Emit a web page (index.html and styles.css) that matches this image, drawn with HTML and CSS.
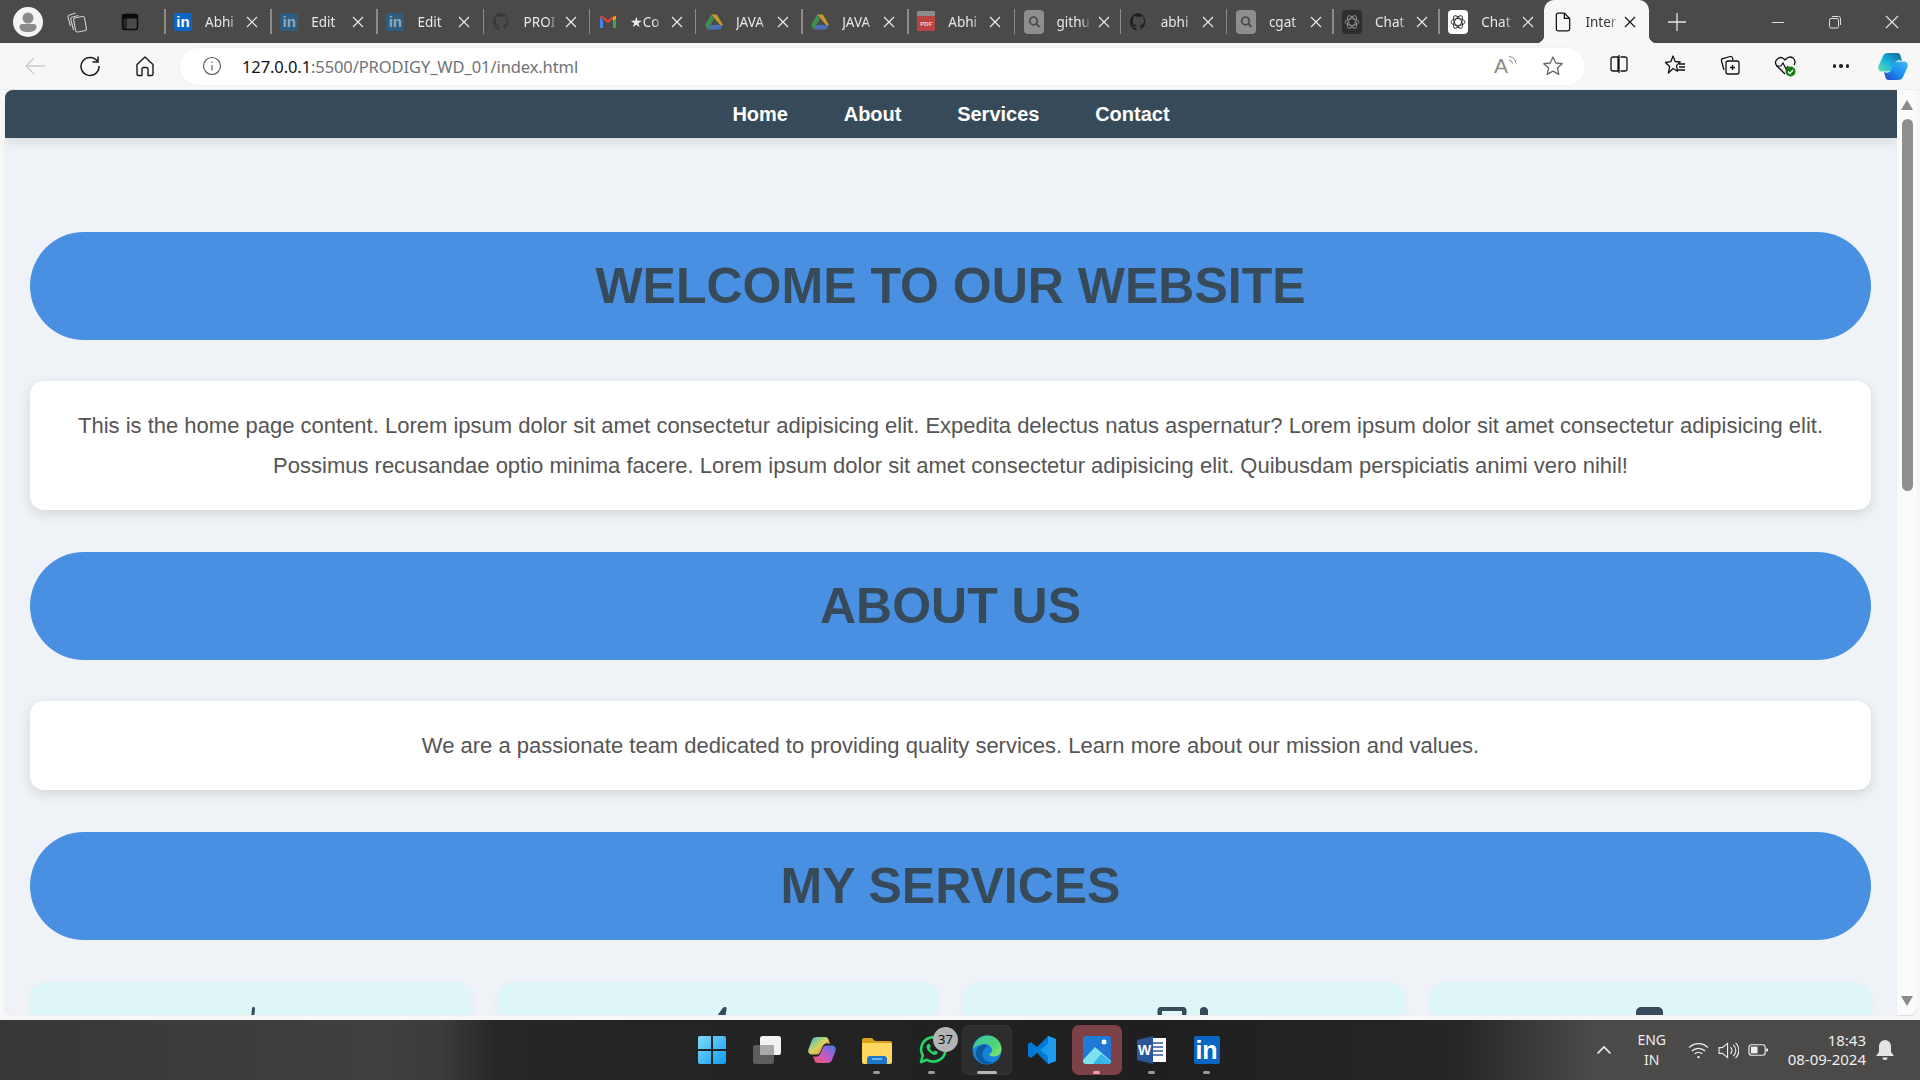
FILE: index.html
```html
<!DOCTYPE html>
<html lang="en">
<head>
<meta charset="utf-8">
<title>Browser window</title>
<link rel="stylesheet" href="styles.css">
</head>
<body>
<div class="desktop">
  <header class="tabbar">
    <div class="tb-left">
      <div class="tb-profile"><span class="avatar"><svg viewBox="0 0 30 30" width="30" height="30"><circle cx="15" cy="11" r="5.5" fill="#8b8b8b"/><path d="M6.5 20a3 3 0 0 1 3-3h11a3 3 0 0 1 3 3c0 3-3 5-8.500 5s-8.500-2-8.500-5z" fill="#8b8b8b"/></svg></span></div>
      <div class="tb-work"><svg viewBox="0 0 24 24" width="24" height="24" fill="none" stroke="#cfcfcf" stroke-width="1.100" stroke-linejoin="round"><rect x="9.500" y="7" width="11" height="14.500" rx="2" transform="rotate(-10 15 14)"/><path d="M8.500 20 5.800 9.500a2 2 0 0 1 1.500-2.500l6-1.500"/><path d="M5.500 16 3 7.500A2 2 0 0 1 4.500 5l6-2"/></svg></div>
      <div class="tb-vert"><svg viewBox="0 0 20 20" width="20" height="20"><rect x="2.500" y="2.500" width="15" height="15" rx="2.500" fill="none" stroke="#0b0b0b" stroke-width="1.500"/><rect x="2.500" y="2.500" width="15" height="4" fill="#0b0b0b"/><rect x="2.500" y="2.500" width="4.500" height="15" fill="#0b0b0b" opacity=".55"/></svg></div>
    </div>

    <div class="tab"><span class="fav in-logo">in</span><span class="tab-t">Abhi</span><svg class="x" viewBox="0 0 12 12"><path d="M1 1l10 10M11 1 1 11"/></svg></div>
    <div class="tab"><span class="fav in-logo dim">in</span><span class="tab-t">Edit</span><svg class="x" viewBox="0 0 12 12"><path d="M1 1l10 10M11 1 1 11"/></svg></div>
    <div class="tab"><span class="fav in-logo dim">in</span><span class="tab-t">Edit</span><svg class="x" viewBox="0 0 12 12"><path d="M1 1l10 10M11 1 1 11"/></svg></div>
    <div class="tab"><svg class="fav" viewBox="0 0 18 18"><path d="M9 0a9 9 0 0 0-2.800 17.600v-3c-2.500.5-3-1.100-3-1.100-.4-1-1-1.300-1-1.300-.8-.6 0-.6 0-.6.900.1 1.400 1 1.400 1 .8 1.400 2.100 1 2.600.8.100-.6.300-1 .6-1.200-2-.2-4.100-1-4.100-4.400 0-1 .3-1.800.9-2.400-.1-.2-.4-1.100.1-2.400 0 0 .8-.2 2.500.9a8.500 8.500 0 0 1 4.500 0c1.700-1.100 2.500-.9 2.500-.9.500 1.300.2 2.200.1 2.400.6.600.9 1.400.9 2.400 0 3.400-2.100 4.200-4.100 4.400.3.300.6.800.6 1.700v2.500A9 9 0 0 0 9 0z" fill="#3a3a3a"/></svg><span class="tab-t">PROI</span><svg class="x" viewBox="0 0 12 12"><path d="M1 1l10 10M11 1 1 11"/></svg></div>
    <div class="tab"><svg class="fav" viewBox="0 0 18 18"><path d="M1 4v11h3V8z" fill="#4285f4"/><path d="M14 8v7h3V4z" fill="#34a853"/><path d="M1 4l8 6 8-6-1.500-1.500L9 7 2.500 2.500z" fill="#ea4335"/><path d="M14 4.500 17 3v2l-3 3z" fill="#fbbc04"/></svg><span class="tab-t">★Co</span><svg class="x" viewBox="0 0 12 12"><path d="M1 1l10 10M11 1 1 11"/></svg></div>
    <div class="tab"><svg class="fav" viewBox="0 0 18 18"><path d="M6.200 1.500h5.600L18 12l-3 0z" fill="#c49a2c"/><path d="M6.200 1.500 0 12l2.800 4.800L9 6z" fill="#3f8d53"/><path d="M2.800 16.500h12.400L18 12H5.500z" fill="#4a6fb5"/></svg><span class="tab-t">JAVA</span><svg class="x" viewBox="0 0 12 12"><path d="M1 1l10 10M11 1 1 11"/></svg></div>
    <div class="tab"><svg class="fav" viewBox="0 0 18 18"><path d="M6.200 1.500h5.600L18 12l-3 0z" fill="#c49a2c"/><path d="M6.200 1.500 0 12l2.800 4.800L9 6z" fill="#3f8d53"/><path d="M2.800 16.500h12.400L18 12H5.500z" fill="#4a6fb5"/></svg><span class="tab-t">JAVA</span><svg class="x" viewBox="0 0 12 12"><path d="M1 1l10 10M11 1 1 11"/></svg></div>
    <div class="tab"><span class="fav pdf">PDF</span><span class="tab-t">Abhi</span><svg class="x" viewBox="0 0 12 12"><path d="M1 1l10 10M11 1 1 11"/></svg></div>
    <div class="tab"><span class="fav search"><svg viewBox="0 0 18 18" width="18" height="18" fill="none" stroke="#4b4a48" stroke-width="1.800"><circle cx="8.500" cy="8" r="3.800"/><path d="M11.500 11l3 3"/></svg></span><span class="tab-t">githu</span><svg class="x" viewBox="0 0 12 12"><path d="M1 1l10 10M11 1 1 11"/></svg></div>
    <div class="tab"><svg class="fav" viewBox="0 0 18 18"><path d="M9 0a9 9 0 0 0-2.800 17.600v-3c-2.500.5-3-1.100-3-1.100-.4-1-1-1.300-1-1.300-.8-.6 0-.6 0-.6.900.1 1.400 1 1.400 1 .8 1.400 2.100 1 2.600.8.100-.6.300-1 .6-1.200-2-.2-4.100-1-4.100-4.400 0-1 .3-1.800.9-2.400-.1-.2-.4-1.100.1-2.400 0 0 .8-.2 2.500.9a8.500 8.500 0 0 1 4.500 0c1.700-1.100 2.500-.9 2.500-.9.500 1.300.2 2.200.1 2.400.6.600.9 1.400.9 2.400 0 3.400-2.100 4.200-4.100 4.400.3.300.6.800.6 1.700v2.500A9 9 0 0 0 9 0z" fill="#1c2127"/></svg><span class="tab-t">abhi</span><svg class="x" viewBox="0 0 12 12"><path d="M1 1l10 10M11 1 1 11"/></svg></div>
    <div class="tab"><span class="fav search"><svg viewBox="0 0 18 18" width="18" height="18" fill="none" stroke="#4b4a48" stroke-width="1.800"><circle cx="8.500" cy="8" r="3.800"/><path d="M11.500 11l3 3"/></svg></span><span class="tab-t">cgat</span><svg class="x" viewBox="0 0 12 12"><path d="M1 1l10 10M11 1 1 11"/></svg></div>
    <div class="tab"><span class="fav gpt dark"><svg viewBox="0 0 18 18" width="18" height="18" fill="none" stroke="#8c8c8c" stroke-width=".9"><ellipse cx="9" cy="9" rx="7" ry="3.400"/><ellipse cx="9" cy="9" rx="7" ry="3.400" transform="rotate(60 9 9)"/><ellipse cx="9" cy="9" rx="7" ry="3.400" transform="rotate(120 9 9)"/></svg></span><span class="tab-t">Chat</span><svg class="x" viewBox="0 0 12 12"><path d="M1 1l10 10M11 1 1 11"/></svg></div>
    <div class="tab"><span class="fav gpt"><svg viewBox="0 0 18 18" width="18" height="18" fill="none" stroke="#2a2a2a" stroke-width=".9"><ellipse cx="9" cy="9" rx="7" ry="3.400"/><ellipse cx="9" cy="9" rx="7" ry="3.400" transform="rotate(60 9 9)"/><ellipse cx="9" cy="9" rx="7" ry="3.400" transform="rotate(120 9 9)"/></svg></span><span class="tab-t">Chat</span><svg class="x" viewBox="0 0 12 12"><path d="M1 1l10 10M11 1 1 11"/></svg></div>
    <div class="tab-active"><svg class="doc" viewBox="0 0 18 22" width="16" height="20" fill="none" stroke="#111" stroke-width="1.400"><path d="M3.500 1h7L16.500 7v12a2 2 0 0 1-2 2h-11a2 2 0 0 1-2-2V3a2 2 0 0 1 2-2z"/><path d="M10.500 1v6h6"/></svg><span class="tab-t active-t">Inter</span><svg class="x dark-x" viewBox="0 0 12 12"><path d="M1 1l10 10M11 1 1 11"/></svg></div>

    <div class="tb-plus"><svg viewBox="0 0 18 18" width="18" height="18" stroke="#e6e6e6" stroke-width="1.300"><path d="M9 0v18M0 9h18"/></svg></div>
    <div class="win">
      <span class="win-btn"><svg viewBox="0 0 14 14" width="14" height="14" stroke="#dcdcdc"><path d="M1 7.500h12"/></svg></span>
      <span class="win-btn"><svg viewBox="0 0 14 14" width="14" height="14" fill="none" stroke="#dcdcdc"><rect x="1.500" y="3.500" width="9" height="9.500" rx="1.500"/><path d="M4 1.500h6.500a2 2 0 0 1 2 2V10"/></svg></span>
      <span class="win-btn"><svg viewBox="0 0 14 14" width="14" height="14" stroke="#e6e6e6" stroke-width="1.100"><path d="M1 1l12 12M13 1 1 13"/></svg></span>
    </div>
  </header>

  <nav class="toolbar">
    <span class="tool"><svg viewBox="0 0 22 22" width="22" height="22" fill="none" stroke="#c9c9c9" stroke-width="1.400"><path d="M21 11H2M10 3l-8 8 8 8"/></svg></span>
    <span class="tool"><svg viewBox="0 0 22 22" width="22" height="22" fill="none" stroke="#1a1a1a" stroke-width="1.500"><path d="M18.500 6.500A9 9 0 1 0 20 11"/><path d="M19 1.500v5.500h-5.500"/></svg></span>
    <span class="tool"><svg viewBox="0 0 22 22" width="22" height="22" fill="none" stroke="#1a1a1a" stroke-width="1.400" stroke-linejoin="round"><path d="M3 9.500 11 2l8 7.500V19a1.500 1.500 0 0 1-1.500 1.500H14V14a1.500 1.500 0 0 0-1.500-1.500h-3A1.500 1.500 0 0 0 8 14v6.500H4.500A1.500 1.500 0 0 1 3 19z"/></svg></span>
    <div class="address">
      <svg class="info" viewBox="0 0 20 20" width="20" height="20" fill="none" stroke="#555" stroke-width="1.100"><circle cx="10" cy="10" r="8.500"/><path d="M10 9v5.500M10 5.500v1.500"/></svg>
      <span class="url"><span class="url-h">127.0.0.1</span>:5500/PRODIGY_WD_01/index.html</span>
      <span class="addr-a">
        <span class="ra">A<svg viewBox="0 0 10 12" width="10" height="12" fill="none" stroke="#8a8a8a"><path d="M1 1.500a8 8 0 0 1 7 7M1 5a4 4 0 0 1 3.500 3.500"/></svg></span>
        <svg viewBox="0 0 22 22" width="22" height="22" fill="none" stroke="#666" stroke-width="1.300" stroke-linejoin="round"><path d="M11 2l2.800 6 6.400.7-4.800 4.300 1.400 6.400L11 16.100l-5.800 3.300 1.400-6.400-4.800-4.300L8.200 8z"/></svg>
      </span>
    </div>
    <div class="tools-r">
      <span class="tool-r"><svg viewBox="0 0 20 20" width="20" height="20" fill="none" stroke="#111" stroke-width="1.300"><path d="M9 3H4a2 2 0 0 0-2 2v10a2 2 0 0 0 2 2h5zM11.500 3H16a2 2 0 0 1 2 2v10a2 2 0 0 1-2 2h-4.500M10 1v18"/></svg></span>
      <span class="tool-r"><svg viewBox="0 0 22 22" width="22" height="22" fill="none" stroke="#111" stroke-width="1.300" stroke-linejoin="round"><path d="M9 2l2.200 5.500 5 .5-3.800 3.600 1.200 5.600L9 14.500 4.400 19l1.200-6.500L1.500 8.500l5.300-.8z"/><path d="M15 10h6M15 13h6M14 16h7"/></svg></span>
      <span class="tool-r"><svg viewBox="0 0 22 22" width="22" height="22" fill="none" stroke="#111" stroke-width="1.300"><rect x="7" y="7" width="13" height="13" rx="2"/><path d="M11 13.500h5M13.500 11v5M5 16 2.500 7a2 2 0 0 1 1.500-2.500l7-2a2 2 0 0 1 2.500 1.500l.5 2"/></svg></span>
      <span class="tool-r"><svg viewBox="0 0 24 24" width="24" height="24" fill="none"><path d="M12 20 3.500 11.500A5 5 0 0 1 11 5l1 1 1-1a5 5 0 0 1 8 6" stroke="#111" stroke-width="1.300"/><path d="M3 12h5l2-3 3 6 2-3" stroke="#111" stroke-width="1.200"/><circle cx="17.500" cy="17.500" r="5" fill="#107c10"/><path d="M15 17.500l2 2 3-3.500" stroke="#fff" stroke-width="1.300"/></svg></span>
      <span class="tool-r dots"><i></i><i></i><i></i></span>
    </div>
    <span class="copilot"><svg viewBox="0 0 30 27" width="30" height="27"><defs><linearGradient id="cpa" x1="0" y1="1" x2="1" y2="0"><stop offset="0" stop-color="#66e3a8"/><stop offset=".45" stop-color="#19b4e0"/><stop offset="1" stop-color="#12648e"/></linearGradient><linearGradient id="cpb" x1="1" y1="0" x2="0" y2="1"><stop offset="0" stop-color="#3bc0f5"/><stop offset=".55" stop-color="#1b8cf0"/><stop offset="1" stop-color="#2244c8"/></linearGradient></defs><path d="M10 0h9c2 0 3 .8 3.500 2.500L24 8c-2-1-5-1-6.500 1-1.500 2-2 4-3 6.500-.6 1.800-2 3-4 3H4c-3 0-4.500-2.500-3.500-5.500L5 3c.7-2 2.500-3 5-3z" fill="url(#cpa)"/><path d="M20 27h-9c-2 0-3-.8-3.500-2.500L6 19c2 1 5 1 6.500-1 1.500-2 2-4 3-6.500.6-1.800 2-3 4-3H26c3 0 4.500 2.500 3.500 5.500L25 24c-.7 2-2.500 3-5 3z" fill="url(#cpb)"/></svg></span>
  </nav>

  <div class="viewport">
    <main class="page">
      <div class="site-nav">
        <a class="site-link">Home</a><a class="site-link">About</a><a class="site-link">Services</a><a class="site-link">Contact</a>
      </div>
      <div class="content">
        <h1 class="banner">WELCOME TO OUR WEBSITE</h1>
        <p class="card">This is the home page content. Lorem ipsum dolor sit amet consectetur adipisicing elit. Expedita delectus natus aspernatur? Lorem ipsum dolor sit amet consectetur adipisicing elit. Possimus recusandae optio minima facere. Lorem ipsum dolor sit amet consectetur adipisicing elit. Quibusdam perspiciatis animi vero nihil!</p>
        <h2 class="banner">ABOUT US</h2>
        <p class="card">We are a passionate team dedicated to providing quality services. Learn more about our mission and values.</p>
        <h2 class="banner">MY SERVICES</h2>
        <div class="services">
          <div class="svc"><svg viewBox="0 0 60 60" width="60" height="60"><path d="M32.500 0c1 0 1.500.5 1.500 1.500L33 12h-3l1-10.500c.1-1 .6-1.500 1.500-1.500z"/></svg></div>
          <div class="svc"><svg viewBox="0 0 60 60" width="60" height="60"><path d="M38 0c1.500 0 1.800 1 1.500 2.500L38 12H28L35 2c1-1.500 2-2 3-2z"/></svg></div>
          <div class="svc"><svg viewBox="0 0 60 60" width="60" height="60"><path d="M7 0h22a3.500 3.500 0 0 1 3.500 3.500V12H3.500V3.500A3.500 3.500 0 0 1 7 0zM8 4v8h20V4z"/><path d="M37 0c2 0 3 1 4 3v9h-8V3c0-2 2-3 4-3z" transform="translate(13 0)"/></svg></div>
          <div class="svc"><svg viewBox="0 0 60 60" width="60" height="60"><path d="M21 0h17a5 5 0 0 1 5 5v7H16V5a5 5 0 0 1 5-5z"/></svg></div>
        </div>
      </div>
    </main>
    <aside class="scrollbar">
      <span class="sb-up"></span>
      <span class="sb-thumb"></span>
      <span class="sb-down"></span>
    </aside>
  </div>

  <footer class="taskbar">
    <div class="tk-side"></div>
    <div class="tk-center">
      <span class="tk"><svg viewBox="0 0 30 30" width="30" height="30"><defs><linearGradient id="wn" x1="0" y1="0" x2="1" y2="1"><stop offset="0" stop-color="#7fdcfb"/><stop offset="1" stop-color="#0f9bf0"/></linearGradient></defs><path d="M1 3a2 2 0 0 1 2-2h11v13H1zM16 1h11a2 2 0 0 1 2 2v11H16zM1 16h13v13H3a2 2 0 0 1-2-2zM16 16h13v11a2 2 0 0 1-2 2H16z" fill="url(#wn)"/></svg></span>
      <span class="tk"><svg viewBox="0 0 30 30" width="30" height="30"><rect x="1" y="10" width="21" height="19" rx="2.500" fill="#5d5d5d"/><rect x="8" y="1" width="21" height="19" rx="2.500" fill="#f2f2f2"/><rect x="8" y="10" width="14" height="10" fill="#a9a9a9"/></svg></span>
      <span class="tk"><svg viewBox="0 0 30 30" width="30" height="30"><defs><linearGradient id="cl" x1="0" y1="0" x2="1" y2="1"><stop offset="0" stop-color="#2fb6e8"/><stop offset=".5" stop-color="#d7d55a"/><stop offset="1" stop-color="#f3704a"/></linearGradient><linearGradient id="cr" x1="1" y1="0" x2="0" y2="1"><stop offset="0" stop-color="#3f7bea"/><stop offset=".5" stop-color="#c05ac8"/><stop offset="1" stop-color="#f2576a"/></linearGradient></defs><path d="M10 2h8c2 0 3 .8 3.500 2.500L23 9c-2-1-5-1-6.500 1-1.500 2-2 4-3 6.500-.6 1.800-2 3-4 3H5c-3 0-4.500-2.500-3.500-5.500L5 5c.7-2 2.500-3 5-3z" fill="url(#cl)"/><path d="M20 28h-9c-2 0-3-.8-3.500-2.500L6 21c2 1 5 1 6.500-1 1.500-2 2-4 3-6.500.6-1.800 2-3 4-3H25c3 0 4.500 2.500 3.500 5.500L25 25c-.7 2-2.500 3-5 3z" fill="url(#cr)"/></svg></span>
      <span class="tk"><svg viewBox="0 0 30 30" width="30" height="30"><path d="M0 5a2 2 0 0 1 2-2h8l3 3h15a2 2 0 0 1 2 2v2H0z" fill="#dda21b"/><path d="M0 8h30v19a2 2 0 0 1-2 2H2a2 2 0 0 1-2-2z" fill="#ffd75e"/><path d="M5 29v-5a3 3 0 0 1 3-3h14a3 3 0 0 1 3 3v5z" fill="#1d77c9"/><path d="M10 24h10" stroke="#8cc9f5" stroke-width="1.500"/></svg><i class="pill"></i></span>
      <span class="tk"><svg viewBox="0 0 30 30" width="30" height="30" fill="none"><path d="M4 27l1.800-6.500A12.200 12.200 0 1 1 10 24.800z" stroke="#25d366" stroke-width="2.600" stroke-linejoin="round"/><path d="M10.500 9.500c1-1 2-.8 2.500.3l.7 1.500c.2.600-.8 1.400-1 2 .7 1.600 2 2.800 3.500 3.500.6-.3 1.300-1.300 2-1l1.700.8c1 .6 1 1.500.2 2.400-2 2-5 .8-8-2.200-2.800-2.800-3.500-5.300-1.600-7.300z" fill="#25d366"/></svg><span class="badge">37</span><i class="pill"></i></span>
      <span class="tk tk-edge"><svg viewBox="0 0 30 30" width="30" height="30"><defs><linearGradient id="eg" x1="0" y1="0" x2="1" y2="1"><stop offset="0" stop-color="#36c5a3"/><stop offset=".6" stop-color="#4fd37a"/><stop offset="1" stop-color="#8ee36f"/></linearGradient></defs><circle cx="15" cy="15" r="14.500" fill="#1683d8"/><path d="M1 14C2 6 8 .5 15.500.5 23.500.5 29.500 6.500 29.500 14c0 5-4 7.500-8 7.500-2.500 0-4.500-1-4.500-2.500 2-.5 3-2 3-3.500 0-4-3.500-6.500-7-6.500-5 0-10 2.500-12 5z" fill="url(#eg)"/><path d="M13 9.500c-5 0-9 4-9 8.500 0 6 5 11 11 11 3 0 5-.8 7-2-3 .8-9 .5-11-4.500-1.500-4 0-9 5-11z" fill="#0c59a4"/></svg><i class="pill wide"></i></span>
      <span class="tk"><svg viewBox="0 0 30 30" width="30" height="30"><path d="M21 1 10 12 4 7 1 9v12l3 2 6-5 11 11 8-3V4z" fill="#0078d4"/><path d="M21 1 29 4v22l-8 3zM21 9v12l-8-6z" fill="#1f9cf0"/></svg></span>
      <span class="tk tk-photos"><svg viewBox="0 0 30 30" width="30" height="30"><defs><linearGradient id="ph" x1="0" y1="0" x2="1" y2="1"><stop offset="0" stop-color="#1a7fd8"/><stop offset="1" stop-color="#2a6fd6"/></linearGradient></defs><rect x="1" y="1" width="28" height="28" rx="3.500" fill="url(#ph)"/><circle cx="22" cy="7" r="2.500" fill="#fff"/><path d="M1 25l12-13 16 14v0a3 3 0 0 1-3 3H4a3 3 0 0 1-3-3z" fill="#7fe0ee"/><path d="M11 29l8-10 10 8a3 3 0 0 1-3 2z" fill="#36b5e8"/></svg><i class="pill pink"></i></span>
      <span class="tk"><svg viewBox="0 0 30 30" width="30" height="30"><path d="M11 3h18v24H11z" fill="#fff"/><path d="M14 8h12M14 12h12M14 16h12M14 20h12" stroke="#2b579a" stroke-width="1.600"/><path d="M0 5l16-4v28L0 25z" fill="#2b579a"/></svg><span class="w-letter">W</span><i class="pill"></i></span>
      <span class="tk"><span class="in-big">in</span><i class="pill"></i></span>
    </div>
    <div class="tk-tray">
      <svg class="chev" viewBox="0 0 16 10" width="16" height="10" fill="none" stroke="#eee" stroke-width="1.700"><path d="M1.500 8.500 8 2l6.500 6.500"/></svg>
      <div class="lang"><span>ENG</span><span>IN</span></div>
      <div class="tray-ic">
        <svg viewBox="0 0 22 18" width="21" height="17" fill="none" stroke="#eee" stroke-width="1.300"><path d="M1 6a14 14 0 0 1 20 0M4 9.500a10 10 0 0 1 14 0M7 12.500a6 6 0 0 1 8 0"/><circle cx="11" cy="16" r="1.300" fill="#eee" stroke="none"/></svg>
        <svg viewBox="0 0 22 18" width="21" height="17" fill="none" stroke="#eee" stroke-width="1.200"><path d="M1 6h3.500L10 1.500v15L4.500 12H1zM13 5.500a4.500 4.500 0 0 1 0 7M16 3a8 8 0 0 1 0 12M18.500 1a11 11 0 0 1 0 16"/></svg>
        <svg viewBox="0 0 22 14" width="21" height="14" fill="none" stroke="#eee" stroke-width="1.200"><rect x="1" y="1.500" width="17" height="11" rx="2.500"/><rect x="3" y="3.500" width="7" height="7" fill="#eee" stroke="none"/><path d="M20 5.500v3" stroke-width="2"/></svg>
      </div>
      <div class="clock"><span>18:43</span><span>08-09-2024</span></div>
      <svg class="bell" viewBox="0 0 18 20" width="18" height="20" fill="#e4e4e4"><path d="M9 0a6 6 0 0 1 6 6v6l3 4H0l3-4V6a6 6 0 0 1 6-6zM6.500 17.500h5A2.500 2.500 0 0 1 9 20a2.500 2.500 0 0 1-2.500-2.500z"/></svg>
    </div>
  </footer>
</div>
</body>
</html>
```
FILE: styles.css
```css
* { box-sizing: border-box; }
html, body { margin: 0; padding: 0; height: 100%; overflow: hidden; }
body { font-family: "Liberation Sans", Arial, sans-serif; background: #f7f7f7; }
svg { display: block; flex: none; }

.desktop { display: grid; grid-template-rows: 43px 47px 930px 60px; width: 1920px; height: 1080px; }

/* tab strip */
.tabbar { display: flex; align-items: stretch; background: #4b4a48; color: #e8e8e8; font-family: "Noto Sans", sans-serif; font-size: 13.500px; }
.tb-left { display: flex; width: 164px; flex: none; align-items: center; }
.tb-profile { width: 56px; display: flex; justify-content: center; }
.avatar { width: 30px; height: 30px; border-radius: 50%; background: #f4f4f4; overflow: hidden; display: block; }
.tb-work { width: 42px; display: flex; justify-content: center; }
.tb-vert { width: 64px; display: flex; justify-content: center; }

.tab { position: relative; flex: none; width: 106.2px; display: flex; align-items: center; padding-left: 10px; }
.tab::before { content: ""; position: absolute; left: 0; top: 9px; bottom: 9px; width: 1.500px; background: #8d8c8a; }
.fav { width: 18px; height: 18px; flex: none; display: flex; align-items: center; justify-content: center; }
.in-logo { background: #0a66c2; color: #fff; font: bold 15px/18px "Liberation Sans", sans-serif; border-radius: 2px; }
.in-logo.dim { background: #2f5d7f; color: #8fa9bb; }
.pdf { background: #b8433f; color: #e9d5d3; font: bold 6px/18px "Liberation Sans", sans-serif; box-shadow: 0 -5px 0 #8b8b8b; height: 15px; margin-top: 4px; border-radius: 1px; }
.search { background: #8f8e8c; border-radius: 4px; width: 20px; height: 24px; }
.gpt { background: #fff; border-radius: 4px; width: 20px; height: 24px; }
.gpt.dark { background: #2e2e2d; }
.tab-t { width: 34px; margin-left: 13px; white-space: nowrap; overflow: hidden; -webkit-mask-image: linear-gradient(90deg, #000 70%, transparent 100%); mask-image: linear-gradient(90deg, #000 70%, transparent 100%); }
.x { width: 12px; height: 12px; flex: none; margin-left: 7px; stroke: #f0f0f0; stroke-width: 1.100; fill: none; }
.tab-active { position: relative; flex: none; width: 105px; background: #f7f7f7; border-radius: 10px 10px 0 0; color: #333; display: flex; align-items: center; padding-left: 11px; }
.tab-active::before, .tab-active::after { content: ""; position: absolute; bottom: 0; width: 8px; height: 8px; background: radial-gradient(circle at 0 0, transparent 8px, #f7f7f7 8.500px); }
.tab-active::before { left: -8px; }
.tab-active::after { right: -8px; transform: scaleX(-1); }
.doc { flex: none; }
.active-t { margin-left: 14px; }
.dark-x { stroke: #111; margin-left: 5px; }
.tb-plus { width: 56px; display: flex; align-items: center; justify-content: center; }
.win { margin-left: auto; display: flex; }
.win-btn { width: 57px; display: flex; align-items: center; justify-content: center; }

/* toolbar */
.toolbar { display: flex; align-items: center; padding-left: 7.500px; background: #f7f7f7; border-bottom: 1px solid #eee; }
.tool { width: 55px; flex: none; display: flex; justify-content: center; }
.address { flex: none; width: 1405px; height: 37px; margin-left: 7.500px; border-radius: 19px; background: #fff; display: flex; align-items: center; padding-left: 22px; box-shadow: 0 0 0 .5px #eee; }
.url { margin-left: 20px; font-family: "Noto Sans", sans-serif; font-size: 16.500px; color: #6e7278; letter-spacing: -.1px; }
.url-h { color: #111; }
.addr-a { margin-left: auto; display: flex; align-items: center; gap: 26px; padding-right: 21px; }
.ra { display: flex; font: 21px/22px "Liberation Sans", sans-serif; color: #8a8a8a; width: 22px; }
.tools-r { display: flex; margin-left: 6.500px; }
.tool-r { width: 55.400px; display: flex; justify-content: center; }
.dots { align-items: center; gap: 3px; }
.dots i { width: 3.500px; height: 3.500px; background: #222; border-radius: 50%; }
.copilot { margin-left: 10px; }

/* page viewport */
.viewport { display: flex; padding: 0 3px 5px 5px; background: #f7f7f7; }
.page { flex: 1; min-width: 0; background: #eff3f8; border-radius: 8px 0 0 8px; overflow: hidden; box-shadow: 0 0 1px rgba(0,0,0,.25); }
.scrollbar { width: 20px; flex: none; background: #fbfbfb; border-radius: 0 8px 8px 0; position: relative; display: flex; flex-direction: column; align-items: center; box-shadow: 0 1px 1px rgba(0,0,0,.12); }
.sb-up, .sb-down { width: 0; height: 0; border-left: 6.500px solid transparent; border-right: 6.500px solid transparent; }
.sb-up { border-bottom: 10px solid #8a8a8a; margin-top: 10px; }
.sb-thumb { width: 11px; height: 372px; border-radius: 6px; background: #8e8e8e; margin-top: 9px; }
.sb-down { border-top: 10px solid #8a8a8a; margin-top: auto; margin-bottom: 9px; }

.site-nav { height: 48px; background: #374a5a; display: flex; justify-content: center; align-items: center; gap: 55.700px; box-shadow: 0 4px 10px rgba(0,0,0,.1); position: relative; }
.site-link { color: #fff; font-weight: bold; font-size: 20px; }

.content { display: flex; flex-direction: column; padding: 94px 26px 0 25px; }
.banner { margin: 0 0 41px; height: 108px; border-radius: 54px; background: #4a90e2; color: #374a5a; font-size: 50px; font-weight: bold; text-align: center; line-height: 108px; }
.card { margin: 0 0 42px; padding: 25px 30px 24px; background: #fff; border-radius: 14px; color: #555; font-size: 22px; line-height: 40px; text-align: center; box-shadow: 0 4px 12px rgba(0,0,0,.12); }
.services { display: grid; grid-template-columns: repeat(4, 1fr); gap: 25px; margin-top: 1px; }
.svc { background: #dff6f9; border-radius: 16px; height: 300px; padding-top: 25px; display: flex; justify-content: center; box-shadow: 0 2px 8px rgba(0,0,0,.03); }
.svc svg { fill: #374a5a; }

/* taskbar */
.taskbar { display: grid; grid-template-columns: 1fr auto 1fr; background: linear-gradient(90deg, #383735 0, #41403e 20%, #3d3b39 23%, #262626 26%, #232323 40%, #1f1f1f 60%, #262626 76%, #4b4a48 83%, #4b4a48 100%); color: #eee; font-family: "Noto Sans", sans-serif; }
.tk-center { display: flex; align-items: center; gap: 5px; margin: 0 1px 0 -1px; }
.tk { position: relative; width: 50px; height: 50px; display: flex; align-items: center; justify-content: center; border-radius: 7px; }
.tk-edge { background: #2d2d2d; box-shadow: inset 0 0 0 1px #353535; }
.tk-photos { background: #7d4148; }
.pill { position: absolute; bottom: 1px; left: 21.500px; width: 7px; height: 3.500px; border-radius: 2px; background: #9a9a9a; }
.pill.wide { width: 20px; left: 15px; background: #b5b5b5; }
.pill.pink { background: #f59ca6; }
.badge { position: absolute; top: 2px; left: 26.500px; width: 25px; height: 25px; border-radius: 50%; background: #b3b3b3; color: #111; font-size: 13px; line-height: 25px; text-align: center; }
.w-letter { position: absolute; left: 11.500px; top: 15px; color: #fff; font: bold 14px/20px "Liberation Sans", sans-serif; }
.in-big { width: 26px; height: 28px; background: #0a66c2; border-radius: 2px; color: #fff; font: bold 25px/28px "Liberation Sans", sans-serif; text-align: center; }
.tk-tray { display: flex; align-items: center; justify-content: flex-end; padding-right: 26px; }
.chev { margin-right: 25px; }
.lang { display: flex; flex-direction: column; align-items: center; width: 30px; font-size: 14px; line-height: 20px; }
.tray-ic { display: flex; align-items: center; gap: 9px; margin-left: 21px; }
.clock { display: flex; flex-direction: column; align-items: flex-end; font-size: 15px; line-height: 19px; margin-left: 19px; }
.bell { margin-left: 10px; }
```
